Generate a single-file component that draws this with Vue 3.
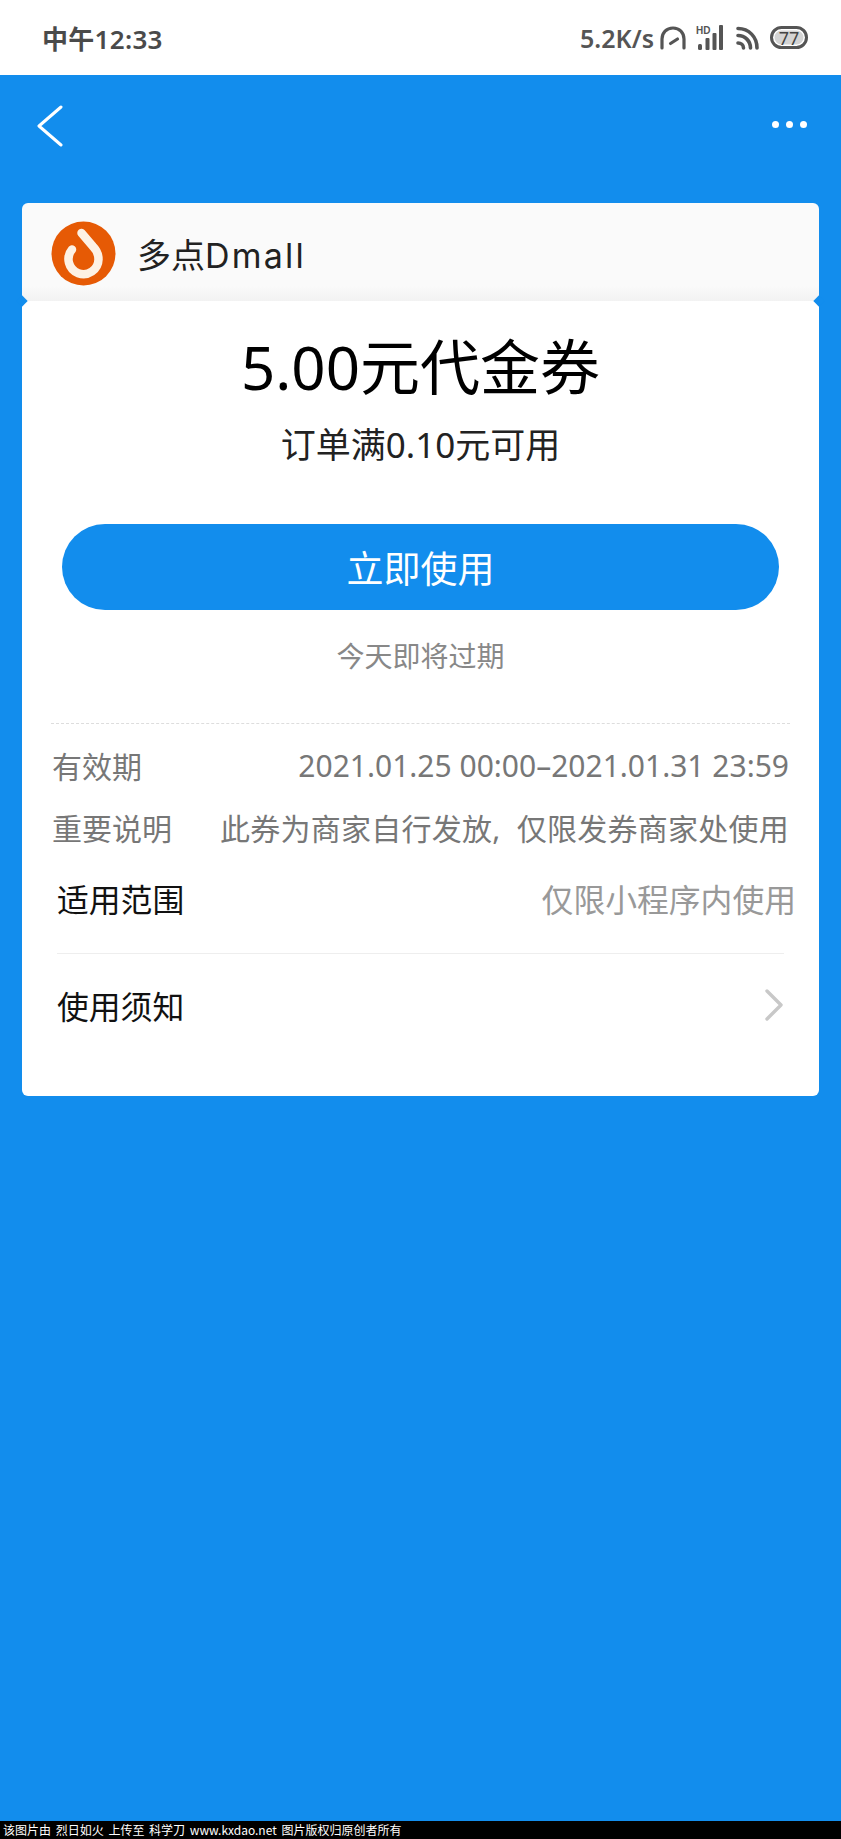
<script setup>
const rows = [
  { label: '有效期', value: '2021.01.25 00:00–2021.01.31 23:59', note: false },
  { label: '重要说明', value: '此券为商家自行发放,  仅限发券商家处使用', note: true }
]
</script>

<template>
  <div class="page">
    <header class="status">
      <span class="time">中午12:33</span>
      <div class="status-right">
        <span class="speed">5.2K/s</span>
        <svg class="ic-arc" width="26" height="24" viewBox="0 0 26 24" fill="none" stroke="#555" stroke-width="3.2" stroke-linecap="round">
          <path d="M2 22V13C2 6.500 6.500 2 13 2s11 4.500 11 11v9" />
          <path d="M10.500 17.500l7-4.500" />
        </svg>
        <svg class="ic-signal" width="27" height="25" viewBox="0 0 27 25" fill="#555">
          <text x="0" y="8.500" class="hd">HD</text>
          <rect x="2" y="19" width="4" height="6" rx="1.500" />
          <rect x="9.500" y="13" width="4" height="12" rx="1" />
          <rect x="16.500" y="8" width="4" height="17" rx="1" />
          <rect x="23" y="0" width="4" height="25" rx="1" />
        </svg>
        <svg class="ic-wifi" width="23" height="24" viewBox="0 0 23 24" fill="none" stroke="#555" stroke-width="3.600" stroke-linecap="round">
          <path d="M2 2.500c11 0 19 8.500 19 19.500" />
          <path d="M2 9.500c7 0 12.500 5.500 12.500 12.500" />
          <path d="M2 17c3 0 5.500 2 5.500 5" />
        </svg>
        <div class="battery"><span>77</span></div>
      </div>
    </header>

    <main class="blue">
      <nav class="nav">
        <svg width="26" height="42" viewBox="0 0 26 42" fill="none" stroke="#fff" stroke-width="3" stroke-linecap="round" stroke-linejoin="round">
          <path d="M24 2L2 21l22 19" />
        </svg>
        <div class="dots"><i></i><i></i><i></i></div>
      </nav>

      <section class="card">
        <div class="merchant">
          <svg class="logo" width="65" height="65" viewBox="0 0 65 65">
            <circle cx="32.500" cy="32.500" r="32" fill="#e65a05" />
            <path d="M30.500 12L42 25.500C45.500 29 47.500 33.500 47.500 38.500A15 15 0 1 1 21 28.500" fill="none" stroke="#fdf1e4" stroke-width="8.500" stroke-linecap="round" stroke-linejoin="round" />
          </svg>
          <span class="merchant-name">多点<span class="latin">Dmall</span></span>
          <i class="notch left"></i>
          <i class="notch right"></i>
        </div>

        <div class="body">
          <h1 class="title">5.00元代金券</h1>
          <p class="sub">订单满0.10元可用</p>
          <button class="use">立即使用</button>
          <p class="expire">今天即将过期</p>
          <div class="dashed"></div>
          <div v-for="r in rows" :key="r.label" class="info">
            <span class="info-label">{{ r.label }}</span>
            <span class="info-value" :class="{ note: r.note }">{{ r.value }}</span>
          </div>
          <div class="line scope">
            <span>适用范围</span>
            <span class="muted">仅限小程序内使用</span>
          </div>
          <div class="divider"></div>
          <div class="line notice">
            <span>使用须知</span>
            <svg width="20" height="32" viewBox="0 0 20 32" fill="none" stroke="#c8c8c8" stroke-width="3.400" stroke-linecap="round" stroke-linejoin="round">
              <path d="M3 2l14 14L3 30" />
            </svg>
          </div>
        </div>
      </section>
    </main>

    <footer class="foot">该图片由  烈日如火  上传至  科学刀  www.kxdao.net  图片版权归原创者所有</footer>
  </div>
</template>

<style>
html, body { margin: 0; padding: 0; background: #128ded; }
</style>

<style scoped>
.page {
  width: 841px;
  height: 1839px;
  display: flex;
  flex-direction: column;
  font-family: "Noto Sans", "Noto Sans CJK SC", sans-serif;
  overflow: hidden;
}
.status {
  height: 75px;
  flex: none;
  background: #fff;
  display: flex;
  align-items: center;
  justify-content: space-between;
  padding: 0 33px 0 43px;
  color: #4a4a4a;
  box-sizing: border-box;
}
.time { font-size: 26px; font-weight: 600; letter-spacing: 0.300px; margin-left: -1px; }
.status-right { display: flex; align-items: center; }
.speed { font-size: 25px; font-weight: 600; color: #555; }
.hd { font-size: 10px; font-weight: 700; font-family: "Liberation Sans", sans-serif; }
.ic-arc { margin-left: 6px; margin-top: 1px; }
.ic-signal { margin-left: 10px; }
.ic-wifi { margin-left: 13px; margin-top: 1px; }
.battery {
  margin-left: 11px;
  width: 38px;
  height: 23px;
  box-sizing: border-box;
  border: 3px solid #555;
  border-radius: 12px;
  display: flex;
  align-items: center;
  justify-content: center;
  background: #d4d4d4;
  box-shadow: inset 0 0 0 1.500px #fff;
}
.battery span { font-size: 18px; line-height: 1; color: #444; }
.blue {
  flex: 1;
  background: #128ded;
  display: flex;
  flex-direction: column;
}
.nav {
  height: 128px;
  box-sizing: border-box;
  padding: 30px 34px 0 37px;
  display: flex;
  justify-content: space-between;
  align-items: flex-start;
}
.dots { display: flex; gap: 7px; margin-top: 16px; }
.dots i { width: 7px; height: 7px; border-radius: 50%; background: #fff; display: block; }
.card {
  margin: 0 22px;
  height: 893px;
  display: flex;
  flex-direction: column;
}
.merchant {
  position: relative;
  height: 98px;
  flex: none;
  background: linear-gradient(#fafafa 85%, #f2f2f2);
  border-radius: 6px 6px 0 0;
  display: flex;
  align-items: center;
  padding: 2px 0 0 29px;
  box-sizing: border-box;
}
.merchant-name { margin-left: 21px; font-size: 34px; color: #222; }
.latin { font-family: Inter, "Noto Sans", sans-serif; letter-spacing: 2.200px; }
.notch {
  position: absolute;
  bottom: -4px;
  width: 8px;
  height: 8px;
  background: #128ded;
  transform: rotate(45deg);
}
.notch.left { left: -4px; }
.notch.right { right: -4px; }
.body {
  flex: 1;
  background: #fff;
  border-radius: 0 0 6px 6px;
  display: flex;
  flex-direction: column;
  padding: 0 29px;
}
.title {
  margin: 26px 0 0;
  font-size: 60px;
  font-weight: 400;
  line-height: 80px;
  text-align: center;
  color: #000;
}
.sub {
  margin: 14px 0 0;
  font-size: 35px;
  line-height: 48px;
  text-align: center;
  color: #222;
}
.use {
  margin: 55px 11px 0;
  height: 86px;
  flex: none;
  border: 0;
  border-radius: 43px;
  background: #128ded;
  color: #fff;
  font: inherit;
  font-size: 37px;
}
.expire {
  margin: 26px 0 0;
  font-size: 28px;
  line-height: 40px;
  text-align: center;
  color: #888;
}
.dashed {
  margin: 47px 0 10px;
  border-top: 1px dashed #ddd;
}
.info {
  display: flex;
  justify-content: space-between;
  align-items: center;
  height: 62px;
  color: #777;
  font-size: 30px;
}
.info-label { margin-left: 1px; }
.info-value { font-size: 30px; white-space: pre; margin-right: 1px; }
.info-value.note { letter-spacing: 0.250px; }
.line {
  display: flex;
  justify-content: space-between;
  align-items: center;
  font-size: 31.800px;
  color: #111;
  padding: 0 6px;
  box-sizing: border-box;
  flex: none;
}
.line.scope { height: 95px; padding: 0 0 15px 6px; margin-right: -6px; }
.divider { height: 1px; margin: 0 6px; background: #eee; flex: none; }
.line.notice { height: 108px; padding-bottom: 7px; }
.muted { color: #999; }
.foot {
  height: 18px;
  flex: none;
  background: #000;
  color: #fff;
  font-size: 12px;
  line-height: 18px;
  padding-left: 3px;
  white-space: pre;
  font-family: "Noto Sans CJK SC", sans-serif;
  word-spacing: 2px;
}
</style>
